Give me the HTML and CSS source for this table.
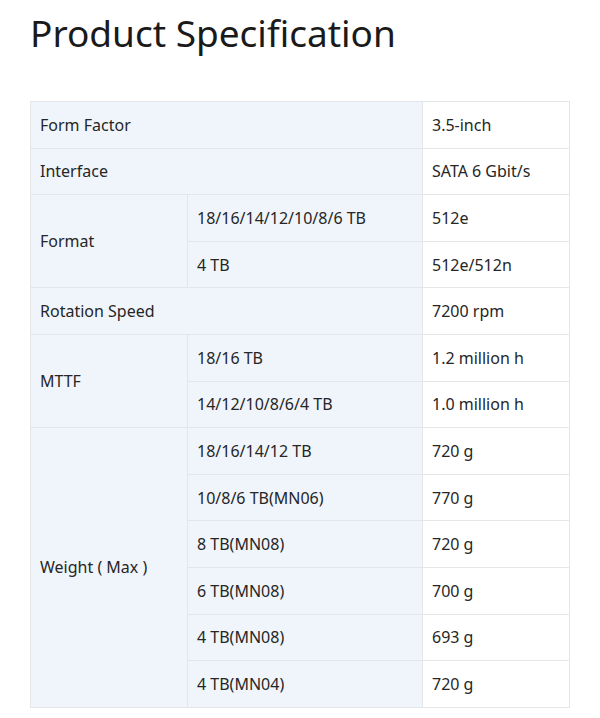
FILE: index.html
```html
<!DOCTYPE html>
<html>
<head>
<meta charset="utf-8">
<link rel="stylesheet" href="styles.css">
</head>
<body>
<div class="page">
  <h1 class="title">Product Specification</h1>
  <table class="spec">
    <colgroup>
      <col class="c1">
      <col class="c2">
      <col class="c3">
    </colgroup>
    <tr><td class="lbl" colspan="2">Form Factor</td><td class="val">3.5-inch</td></tr>
    <tr><td class="lbl" colspan="2">Interface</td><td class="val">SATA 6 Gbit/s</td></tr>
    <tr><td class="lbl" rowspan="2">Format</td><td class="lbl">18/16/14/12/10/8/6 TB</td><td class="val">512e</td></tr>
    <tr><td class="lbl">4 TB</td><td class="val">512e/512n</td></tr>
    <tr><td class="lbl" colspan="2">Rotation Speed</td><td class="val">7200 rpm</td></tr>
    <tr><td class="lbl" rowspan="2">MTTF</td><td class="lbl">18/16 TB</td><td class="val">1.2 million h</td></tr>
    <tr><td class="lbl">14/12/10/8/6/4 TB</td><td class="val">1.0 million h</td></tr>
    <tr><td class="lbl" rowspan="6">Weight ( Max )</td><td class="lbl">18/16/14/12 TB</td><td class="val">720 g</td></tr>
    <tr><td class="lbl">10/8/6 TB(MN06)</td><td class="val">770 g</td></tr>
    <tr><td class="lbl">8 TB(MN08)</td><td class="val">720 g</td></tr>
    <tr><td class="lbl">6 TB(MN08)</td><td class="val">700 g</td></tr>
    <tr><td class="lbl">4 TB(MN08)</td><td class="val">693 g</td></tr>
    <tr><td class="lbl">4 TB(MN04)</td><td class="val">720 g</td></tr>
  </table>
</div>
</body>
</html>
```
FILE: styles.css
```css
html, body {
  margin: 0;
  padding: 0;
  background: #fff;
}
.page {
  padding: 10px 30px 0 30px;
  font-family: "Noto Sans", "Open Sans", sans-serif;
  color: #222;
}
.title {
  margin: 0;
  font-size: 37px;
  font-weight: 400;
  line-height: 46px;
  color: #1a1a1a;
}
.spec {
  margin-top: 45px;
  width: 539px;
  border-collapse: collapse;
  table-layout: fixed;
  font-size: 16px;
  color: #262626;
}
.c1 { width: 157px; }
.c2 { width: 235px; }
.c3 { width: 147px; }
.spec td {
  border: 1px solid #e4e6ea;
  height: 46.6px;
  padding: 0 9px;
  vertical-align: middle;
  line-height: 20px;
  box-sizing: border-box;
}
.spec td.lbl {
  background: #f0f5fb;
}
.spec td.val {
  background: #fff;
}
```
